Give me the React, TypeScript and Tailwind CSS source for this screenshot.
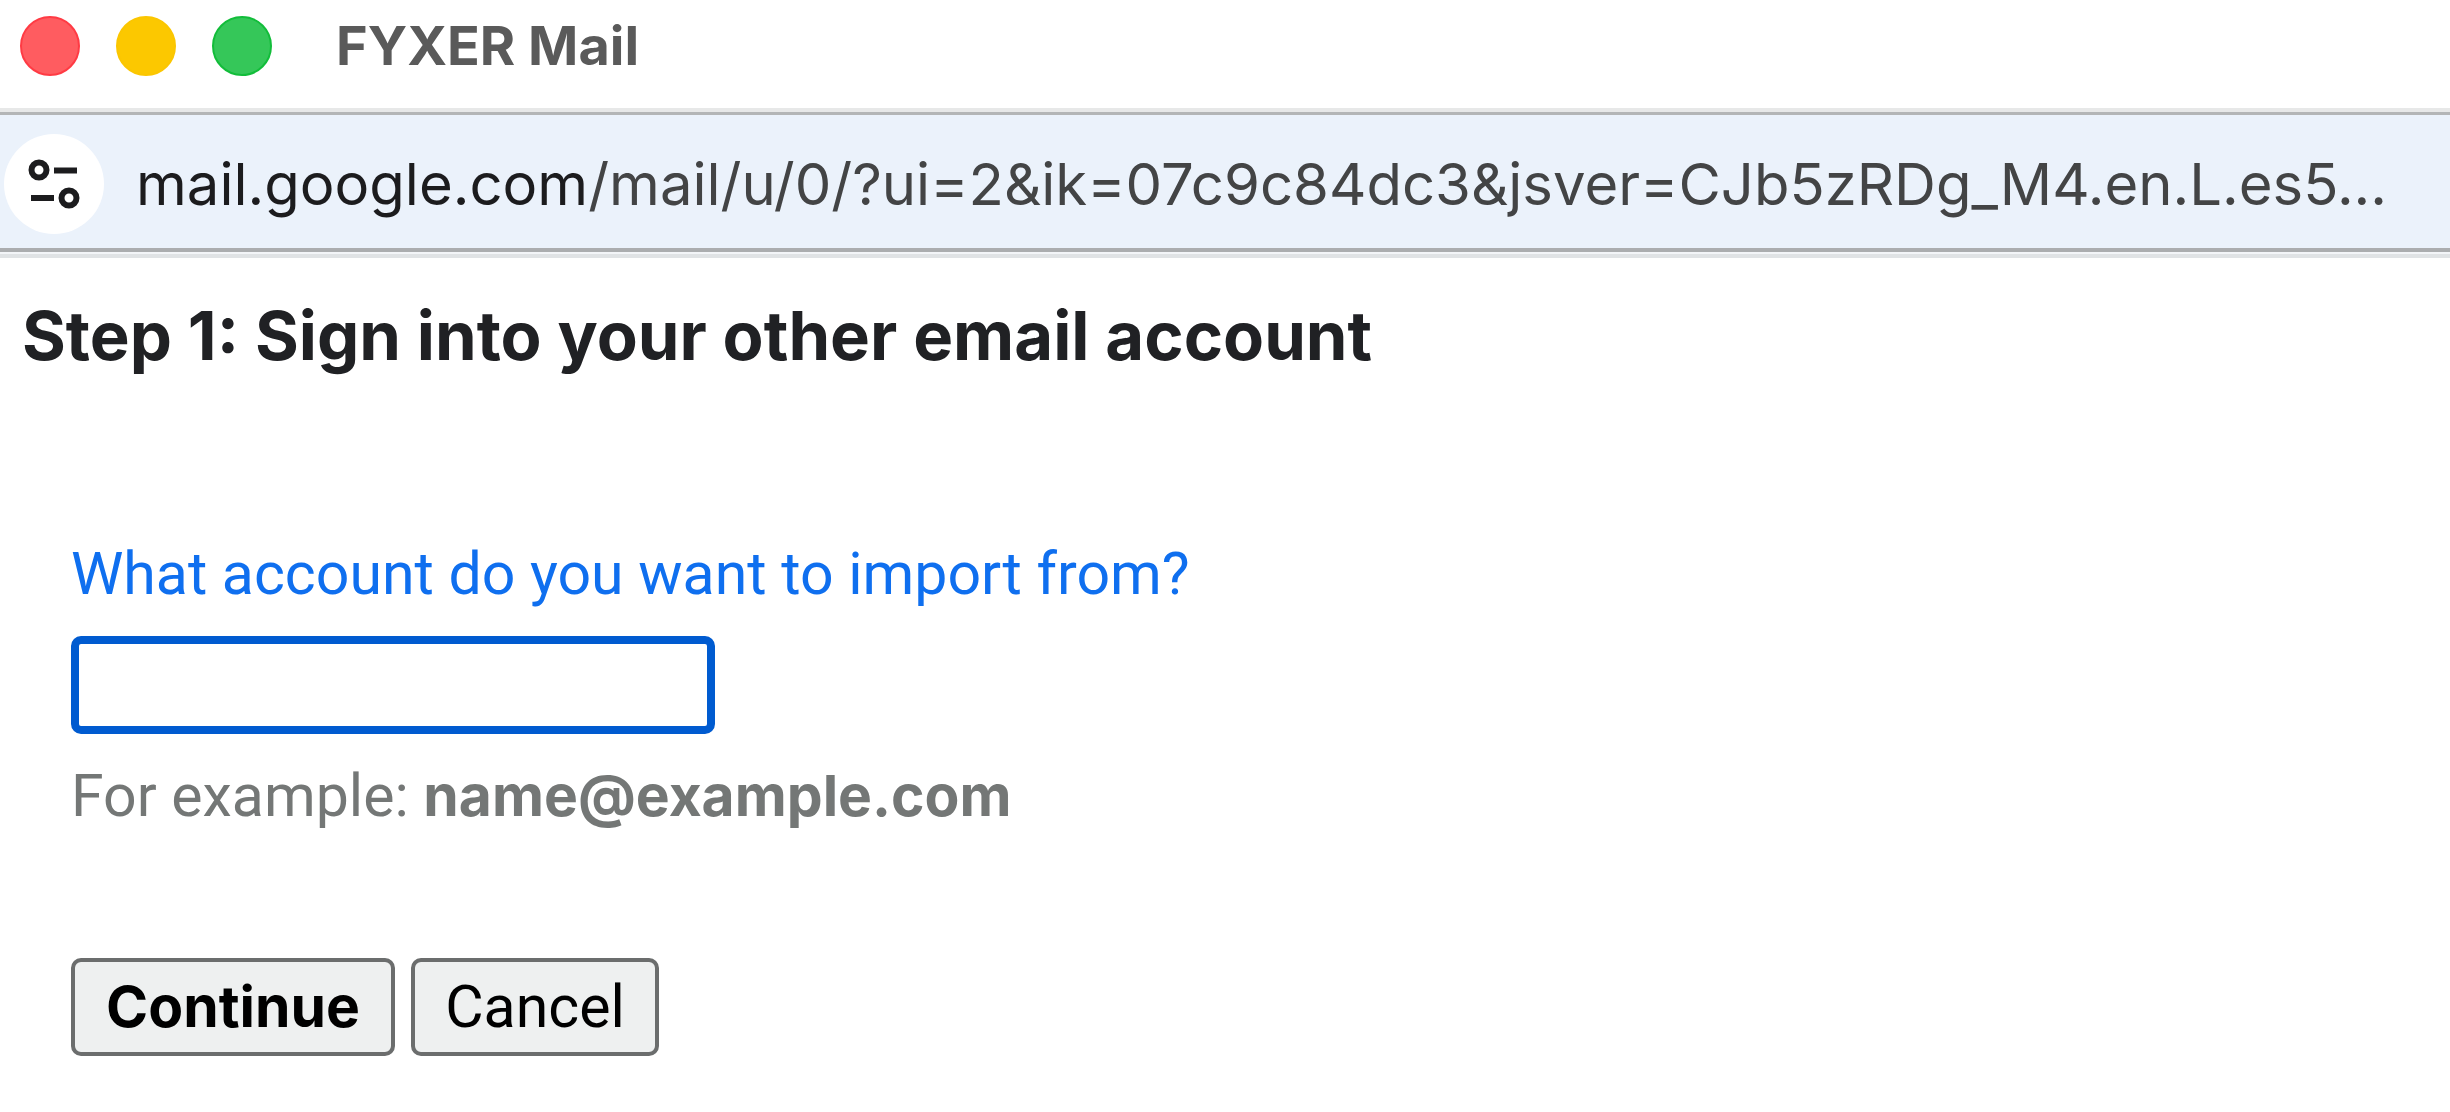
function SiteSettingsIcon() {
  return (
    <svg viewBox="0 0 56 56" className="size-14" fill="none" stroke="#1c1c1e" strokeWidth="6" aria-hidden>
      <circle cx="13" cy="14" r="7.5" />
      <path d="M28 14.5h23" />
      <path d="M5 42h23" />
      <circle cx="43" cy="42" r="7.5" />
    </svg>
  )
}

function TitleBar() {
  return (
    <header className="flex h-27 items-center bg-white px-5 pb-4">
      <div className="flex gap-9">
        <span className="size-15 rounded-full border-2 border-[#ff3b44] bg-[#ff5c60]" />
        <span className="size-15 rounded-full border-2 border-[#fbc600] bg-[#fcc800]" />
        <span className="size-15 rounded-full border-2 border-[#12bd3a] bg-[#35c759]" />
      </div>
      <h1 className="ml-16 text-[54px] leading-15 font-bold text-[#5a5a5a]">FYXER Mail</h1>
    </header>
  )
}

function AddressBar() {
  return (
    <div className="border-t-4 border-b-4 border-t-[#e7e8e8] border-b-[#e0e3e5]">
      <div className="border-b-2 border-[#f3f5f8]">
        <div className="flex h-35 items-center border-t-3 border-b-4 border-t-[#b3b5b6] border-b-[#abadaf] bg-[#ebf2fb] px-1 pt-1">
          <button
            type="button"
            aria-label="View site information"
            className="flex size-25 shrink-0 items-center justify-center rounded-full bg-white"
          >
            <SiteSettingsIcon />
          </button>
          <p className="ml-8 text-[58px] leading-20 whitespace-nowrap text-[#434445]">
            <span className="text-[#1c1c1e]">mail.google.com</span>
            /mail/u/0/?ui=2&amp;ik=07c9c84dc3&amp;jsver=CJb5zRDg_M4.en.L.es5...
          </p>
        </div>
      </div>
    </div>
  )
}

export default function App() {
  return (
    <div className="min-h-screen overflow-hidden bg-white font-[Inter,sans-serif]">
      <TitleBar />
      <AddressBar />
      <main className="px-[22px] pt-[30px]">
        <h2 className="text-[67px] leading-24 font-bold text-[#202124]">Step 1: Sign into your other email account</h2>
        <form className="px-[49px] pt-[150px] font-[Roboto,sans-serif] text-[59px] leading-20">
          <label htmlFor="account" className="block text-[#0f6fef]">
            What account do you want to import from?
          </label>
          <input
            id="account"
            type="email"
            className="mt-[22px] block h-[98px] w-[644px] rounded-[10px] border-8 border-[#005bd0] px-4 outline-none"
          />
          <p className="mt-[22px] text-[#747776]">
            For example: <b className="font-[Inter,sans-serif] text-[57px] font-bold">name@example.com</b>
          </p>
          <div className="mt-[122px] flex gap-4 text-black">
            <button
              type="button"
              className="h-[98px] w-[324px] rounded-[10px] border-4 border-[#6b6d6d] bg-[#eef0f0] font-[Inter,sans-serif] text-[57px] font-bold"
            >
              Continue
            </button>
            <button
              type="button"
              className="h-[98px] w-[248px] rounded-[10px] border-4 border-[#6b6d6d] bg-[#eef0f0]"
            >
              Cancel
            </button>
          </div>
        </form>
      </main>
    </div>
  )
}
